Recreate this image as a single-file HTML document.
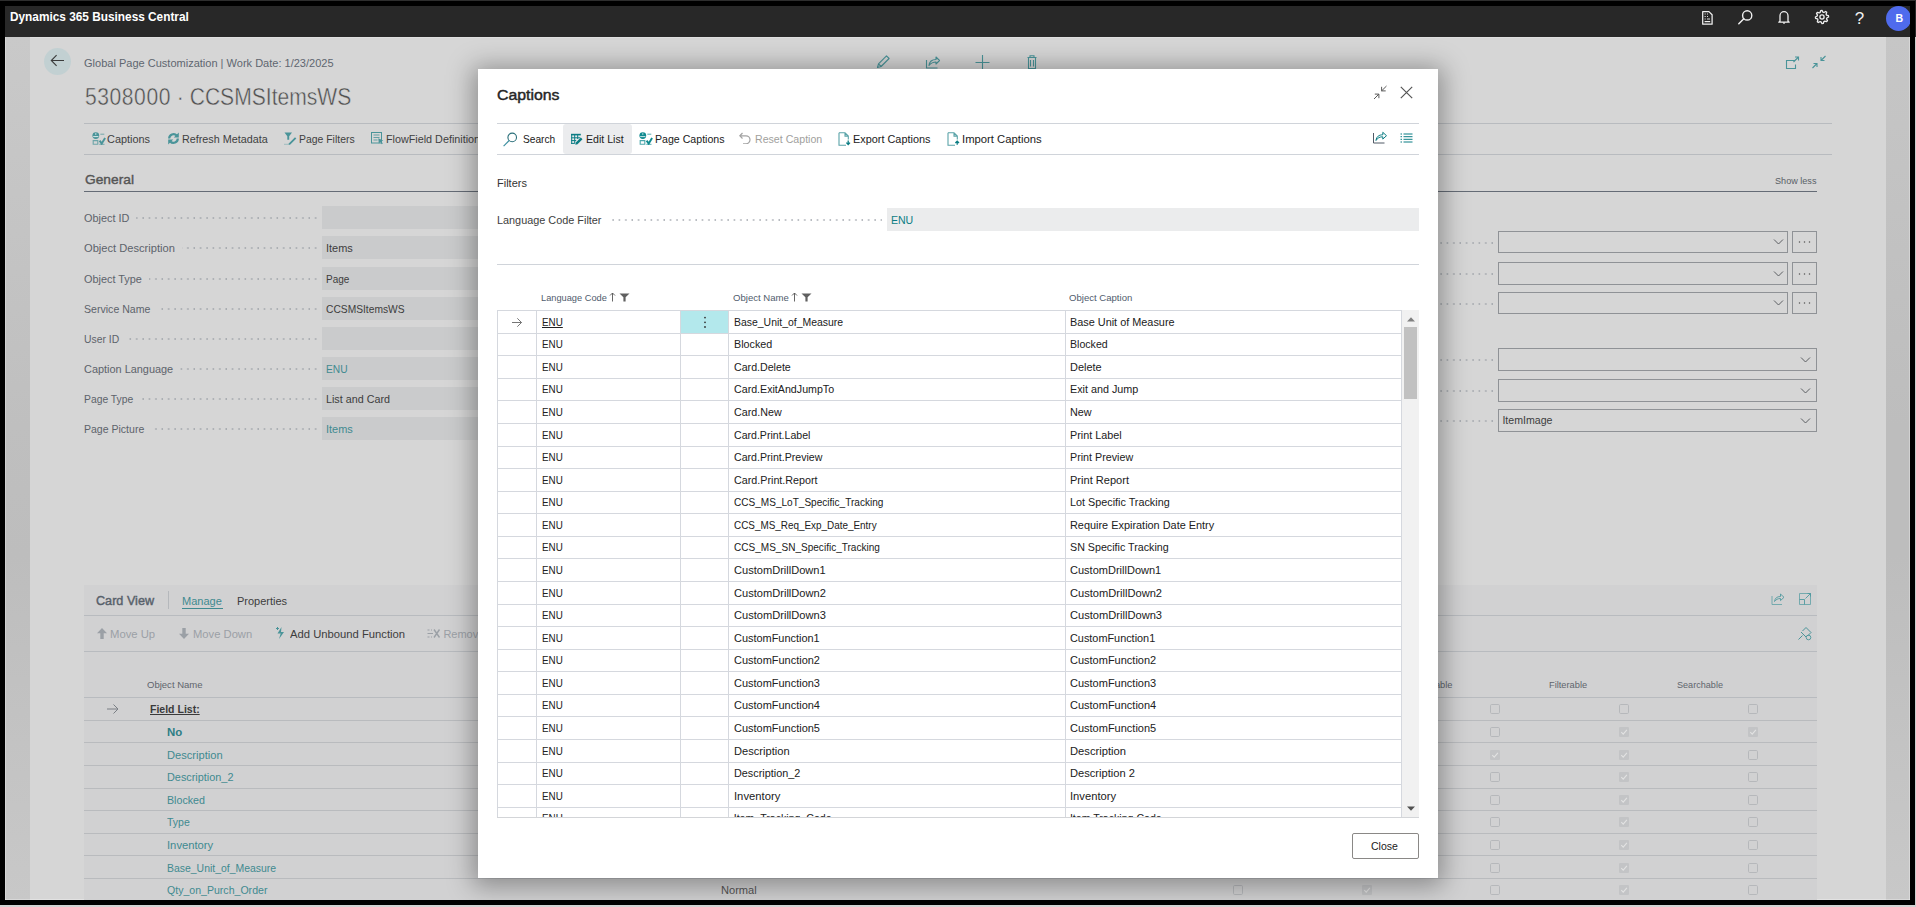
<!DOCTYPE html>
<html><head><meta charset="utf-8"><title>Captions</title>
<style>
html,body{margin:0;padding:0}
body{width:1916px;height:907px;position:relative;overflow:hidden;background:#000;font-family:"Liberation Sans",sans-serif}
.t{position:absolute;white-space:nowrap;line-height:20px}
.r{position:absolute;display:block}
#app{position:absolute;left:0;top:0;width:1916px;height:907px;clip-path:inset(6px 6px 7px 5px);background:#d6d6d6}
</style></head><body>
<div class="r" style="left:0px;top:0px;width:1916px;height:1px;background:#2e2e2e;"></div>
<div class="r" style="left:0px;top:905px;width:1916px;height:2px;background:#d2d2d2;"></div>
<div class="r" style="left:1915px;top:0px;width:1px;height:37px;background:#2a2a2a;"></div>
<div class="r" style="left:1915px;top:37px;width:1px;height:870px;background:#cdcdcd;"></div>
<div id="app">
<div class="r" style="left:5px;top:37px;width:25px;height:863px;background:linear-gradient(180deg,#c9c9c9 0%,#bfbfbf 45%,#bdbdbd 60%,#c8c8c8 100%);"></div>
<div class="r" style="left:5px;top:37px;width:1px;height:863px;background:rgba(255,255,255,0.25);"></div>
<div class="r" style="left:1886px;top:37px;width:24px;height:863px;background:linear-gradient(180deg,#c6c6c6 0%,#bdbdbd 45%,#bdbdbd 60%,#c8c8c8 100%);"></div>
<div class="r" style="left:1909px;top:37px;width:1px;height:863px;background:rgba(255,255,255,0.3);"></div>
<div class="r" style="left:5px;top:899px;width:1905px;height:1px;background:rgba(255,255,255,0.3);"></div>
<div class="r" style="left:5px;top:6px;width:1905px;height:31px;background:#282828;"></div>
<div class="r" style="left:30px;top:37px;width:1856px;height:1px;background:#dedede;"></div>
<div class="t" style="left:10.30px;top:7px;font-size:11.9px;color:#ffffff;font-weight:700;transform:scaleX(0.9948);transform-origin:0 0;">Dynamics 365 Business Central</div>
<svg class="r" style="left:1700px;top:9px;" width="16" height="18" viewBox="0 0 16 18"><path d="M2.7 2.6h6.2l3.2 3.2v9.4H2.7z" fill="none" stroke="#f0f0f0" stroke-width="1.25" stroke-linejoin="round"/><path d="M4.6 4.4h1.1v1.1H4.6zM7 4.4h1v1.1H7zM4.6 6.9h1.1v1.1H4.6zM7 6.9h1v1.1H7zM4.6 9.4h1.1v1.1H4.6zM7 9.6h3v0.9H7z" fill="#f0f0f0" opacity="0.9"/><path d="M4.6 12.6h5.6" stroke="#f0f0f0" stroke-width="1.2"/></svg>
<svg class="r" style="left:1736px;top:8px;" width="18" height="18" viewBox="0 0 18 18"><circle cx="11.2" cy="7.4" r="4.6" fill="none" stroke="#f0f0f0" stroke-width="1.4"/><path d="M7.8 10.8L2.8 15.8" stroke="#f0f0f0" stroke-width="1.5" stroke-linecap="round"/></svg>
<svg class="r" style="left:1776px;top:9px;" width="16" height="18" viewBox="0 0 16 18"><path d="M4 12.2V6.7a4 4 0 0 1 8 0v5.5l1.2 1H2.8z" fill="none" stroke="#f0f0f0" stroke-width="1.3" stroke-linejoin="round"/><path d="M6.8 13.6l1.2 1 1.2-1" fill="#f0f0f0" stroke="#f0f0f0" stroke-width="0.8"/></svg>
<svg class="r" style="left:1814px;top:9.4px;" width="16" height="16" viewBox="0 0 16 16"><polygon points="14.47,6.71 14.60,8.00 12.81,8.96 12.53,9.88 13.49,11.67 12.67,12.67 10.72,12.07 9.88,12.53 9.29,14.47 8.00,14.60 7.04,12.81 6.12,12.53 4.33,13.49 3.33,12.67 3.93,10.72 3.47,9.88 1.53,9.29 1.40,8.00 3.19,7.04 3.47,6.12 2.51,4.33 3.33,3.33 5.28,3.93 6.12,3.47 6.71,1.53 8.00,1.40 8.96,3.19 9.88,3.47 11.67,2.51 12.67,3.33 12.07,5.28 12.53,6.12" fill="none" stroke="#f0f0f0" stroke-width="1.3" stroke-linejoin="round"/><circle cx="8" cy="8" r="2.1" fill="none" stroke="#f0f0f0" stroke-width="1.3"/></svg>
<div class="t" style="left:1854.80px;top:9px;font-size:17px;color:#f0f0f0;">?</div>
<div class="r" style="left:1886px;top:6px;width:25px;height:25px;background:#4f6bed;border-radius:50%;"></div>
<div class="t" style="left:1895.40px;top:8px;font-size:10.6px;color:#ffffff;font-weight:700;">B</div>
<div class="r" style="left:44px;top:47.8px;width:27px;height:27px;background:#c2d0d2;border-radius:50%;"></div>
<svg class="r" style="left:50px;top:54px;" width="15" height="13" viewBox="0 0 15 13"><path d="M14 6.5H1.3M6.6 1.2L1.3 6.5l5.3 5.3" fill="none" stroke="#3b3b3b" stroke-width="1.1"/></svg>
<div class="t" style="left:84.30px;top:53px;font-size:11.0px;color:#5f6670;transform:scaleX(1.0020);transform-origin:0 0;">Global Page Customization | Work Date: 1/23/2025</div>
<div class="t" style="left:85.30px;top:87px;font-size:23.7px;color:#505050;transform:scaleX(0.89);transform-origin:0 0;-webkit-text-stroke:0.45px #d6d6d6;"><span style="letter-spacing:0.62px">5308000</span> · CCSMSItemsWS</div>
<svg class="r" style="left:875px;top:54px;" width="16" height="16" viewBox="0 0 16 16"><path d="M2.5 13.5l1-3.6 8-8 2.6 2.6-8 8z M3.5 9.9l2.6 2.6" fill="none" stroke="#4a9499" stroke-width="1.1" stroke-linejoin="round"/></svg>
<svg class="r" style="left:925px;top:54px;" width="16" height="16" viewBox="0 0 16 16"><path d="M1.5 6v8h11" fill="none" stroke="#4a9499" stroke-width="1.1"/><path d="M4 11.5c0.5-4 3-6 7-6V3l3.5 3.5L11 10V8c-3 0-5 1-7 3.5z" fill="none" stroke="#4a9499" stroke-width="1.1" stroke-linejoin="round"/></svg>
<svg class="r" style="left:974px;top:54px;" width="17" height="16" viewBox="0 0 17 16"><path d="M8.5 1v15M1.5 8.5h14" stroke="#4a9499" stroke-width="1.1"/></svg>
<svg class="r" style="left:1024px;top:54px;" width="16" height="16" viewBox="0 0 16 16"><path d="M3.5 3.5h9M6 3.5V1.8h4v1.7M4.5 3.5v11h7v-11M6.5 6v6.5M9.5 6v6.5" fill="none" stroke="#4a9499" stroke-width="1.1"/></svg>
<svg class="r" style="left:1784px;top:55px;" width="18" height="15" viewBox="0 0 18 15"><path d="M11 5.5H2.5v8h9V9.5" fill="none" stroke="#4a9499" stroke-width="1.1"/><path d="M9.5 7l5-5M11 2h3.5v3.5" fill="none" stroke="#4a9499" stroke-width="1.1"/></svg>
<svg class="r" style="left:1810px;top:54px;" width="18" height="16" viewBox="0 0 18 16"><path d="M15.5 2l-4.5 4.5M11 3v3.5h3.5M2.5 14l4.5-4.5M7 13V9.5H3.5" fill="none" stroke="#4a9499" stroke-width="1.1"/></svg>
<div class="r" style="left:84px;top:123px;width:1748px;height:1px;background:#b8bbbf;"></div>
<div class="r" style="left:84px;top:154px;width:1748px;height:1px;background:#b8bbbf;"></div>
<svg class="r" style="left:92px;top:131.5px;" width="14" height="13" viewBox="0 0 14 13"><circle cx="3.8" cy="3.6" r="3.4" fill="#4a9499"/><path d="M1.2 4.6h5.2M3.8 1.2v1.6" stroke="#fff" stroke-width="0.9" opacity="0.9"/><path d="M8.3 2.2h4" stroke="#4a9499" stroke-width="1" opacity="0.7"/><path d="M1.2 8.6h4.6v3.6H1.2z" fill="none" stroke="#4a9499" stroke-width="1.1" opacity="0.75"/><path d="M7.6 8.6l2.1 3 3.4-5.6" fill="none" stroke="#4a9499" stroke-width="1.9"/><path d="M7.3 12.3h5.2" stroke="#4a9499" stroke-width="1" opacity="0.7"/></svg>
<div class="t" style="left:107.30px;top:129px;font-size:10.9px;color:#3f3f3f;transform:scaleX(1.0023);transform-origin:0 0;">Captions</div>
<svg class="r" style="left:167px;top:132px;" width="13" height="13" viewBox="0 0 13 13"><path d="M2.2 6.5a4.3 4.3 0 0 1 7.5-2.9M10.8 6.5a4.3 4.3 0 0 1-7.5 2.9" fill="none" stroke="#4a9499" stroke-width="2.2"/><path d="M11.8 0.6v5H6.8zM1.2 12.4v-5h5z" fill="#4a9499"/></svg>
<div class="t" style="left:181.90px;top:129px;font-size:10.8px;color:#3f3f3f;transform:scaleX(0.9987);transform-origin:0 0;">Refresh Metadata</div>
<svg class="r" style="left:284px;top:131.5px;" width="13" height="13" viewBox="0 0 13 13"><path d="M0.5 0.5h7.5L5.2 4.3v3.5H3.3V4.3z" fill="#4a9499"/><path d="M5 11.2l6-6 1.3 1.3-6 6-1.9 0.6z" fill="#4a9499"/><path d="M0.5 12.3h3" stroke="#4a9499" stroke-width="0.8" stroke-dasharray="1 1"/></svg>
<div class="t" style="left:299.00px;top:130px;font-size:10.45px;color:#3f3f3f;transform:scaleX(0.9991);transform-origin:0 0;">Page Filters</div>
<svg class="r" style="left:371px;top:131.5px;" width="13" height="13" viewBox="0 0 13 13"><rect x="0.5" y="0.5" width="10" height="10.5" fill="none" stroke="#4a9499" stroke-width="1"/><path d="M2.5 3h6M2.5 5.5h6M2.5 8h4" stroke="#4a9499" stroke-width="1" opacity="0.8"/><path d="M7.3 6.3l5 2.2-2 0.8 1.5 2.2-1 0.7-1.4-2.2-1.6 1.4z" fill="#4a9499"/></svg>
<div class="t" style="left:385.90px;top:129px;font-size:10.8px;color:#3f3f3f;">FlowField Definitions</div>
<div class="t" style="left:84.60px;top:170px;font-size:13.6px;color:#555555;transform:scaleX(1.0121);transform-origin:0 0;-webkit-text-stroke:0.4px #555555;">General</div>
<div class="r" style="left:84px;top:190.5px;width:1733px;height:1.5px;background:#656c76;"></div>
<div class="t" style="left:1775.20px;top:171px;font-size:9.15px;color:#5a5f66;transform:scaleX(0.9970);transform-origin:0 0;">Show less</div>
<div class="t" style="left:84.30px;top:208px;font-size:11.2px;color:#5d636b;transform:scaleX(0.9721);transform-origin:0 0;">Object ID</div>
<div class="r" style="left:136px;top:217px;width:185px;height:2px;background:radial-gradient(circle at 1px 1px,#a6aaaf 0.6px,transparent 0.9px);background-size:6.4px 2px;background-repeat:repeat-x;background-position:right 0;"></div>
<div class="r" style="left:322px;top:206px;width:160px;height:23px;background:#cacbcc;"></div>
<div class="t" style="left:84.30px;top:238px;font-size:11.2px;color:#5d636b;transform:scaleX(0.9945);transform-origin:0 0;">Object Description</div>
<div class="r" style="left:182px;top:247px;width:139px;height:2px;background:radial-gradient(circle at 1px 1px,#a6aaaf 0.6px,transparent 0.9px);background-size:6.4px 2px;background-repeat:repeat-x;background-position:right 0;"></div>
<div class="r" style="left:322px;top:236px;width:160px;height:23px;background:#cacbcc;"></div>
<div class="t" style="left:325.60px;top:238px;font-size:10.8px;color:#3d3d3d;transform:scaleX(1.0149);transform-origin:0 0;">Items</div>
<div class="t" style="left:84.30px;top:269px;font-size:11.2px;color:#5d636b;transform:scaleX(0.9717);transform-origin:0 0;">Object Type</div>
<div class="r" style="left:149px;top:278px;width:172px;height:2px;background:radial-gradient(circle at 1px 1px,#a6aaaf 0.6px,transparent 0.9px);background-size:6.4px 2px;background-repeat:repeat-x;background-position:right 0;"></div>
<div class="r" style="left:322px;top:267px;width:160px;height:23px;background:#cacbcc;"></div>
<div class="t" style="left:325.60px;top:269px;font-size:10.8px;color:#3d3d3d;transform:scaleX(0.9279);transform-origin:0 0;">Page</div>
<div class="t" style="left:84.30px;top:299px;font-size:11.2px;color:#5d636b;transform:scaleX(0.9455);transform-origin:0 0;">Service Name</div>
<div class="r" style="left:157px;top:308px;width:164px;height:2px;background:radial-gradient(circle at 1px 1px,#a6aaaf 0.6px,transparent 0.9px);background-size:6.4px 2px;background-repeat:repeat-x;background-position:right 0;"></div>
<div class="r" style="left:322px;top:297px;width:160px;height:23px;background:#cacbcc;"></div>
<div class="t" style="left:325.60px;top:299px;font-size:10.8px;color:#3d3d3d;transform:scaleX(0.9495);transform-origin:0 0;">CCSMSItemsWS</div>
<div class="t" style="left:84.30px;top:329px;font-size:11.2px;color:#5d636b;transform:scaleX(0.9271);transform-origin:0 0;">User ID</div>
<div class="r" style="left:126px;top:338px;width:195px;height:2px;background:radial-gradient(circle at 1px 1px,#a6aaaf 0.6px,transparent 0.9px);background-size:6.4px 2px;background-repeat:repeat-x;background-position:right 0;"></div>
<div class="r" style="left:322px;top:327px;width:160px;height:23px;background:#cacbcc;"></div>
<div class="t" style="left:84.30px;top:359px;font-size:11.2px;color:#5d636b;transform:scaleX(0.9753);transform-origin:0 0;">Caption Language</div>
<div class="r" style="left:180px;top:368px;width:141px;height:2px;background:radial-gradient(circle at 1px 1px,#a6aaaf 0.6px,transparent 0.9px);background-size:6.4px 2px;background-repeat:repeat-x;background-position:right 0;"></div>
<div class="r" style="left:322px;top:357px;width:160px;height:23px;background:#cacbcc;"></div>
<div class="t" style="left:325.60px;top:359px;font-size:10.8px;color:#3f8a90;transform:scaleX(0.9435);transform-origin:0 0;">ENU</div>
<div class="t" style="left:84.30px;top:389px;font-size:11.2px;color:#5d636b;transform:scaleX(0.9238);transform-origin:0 0;">Page Type</div>
<div class="r" style="left:140px;top:398px;width:181px;height:2px;background:radial-gradient(circle at 1px 1px,#a6aaaf 0.6px,transparent 0.9px);background-size:6.4px 2px;background-repeat:repeat-x;background-position:right 0;"></div>
<div class="r" style="left:322px;top:387px;width:160px;height:23px;background:#cacbcc;"></div>
<div class="t" style="left:325.60px;top:389px;font-size:10.8px;color:#3d3d3d;transform:scaleX(0.9960);transform-origin:0 0;">List and Card</div>
<div class="t" style="left:84.30px;top:419px;font-size:11.2px;color:#5d636b;transform:scaleX(0.9404);transform-origin:0 0;">Page Picture</div>
<div class="r" style="left:151px;top:428px;width:170px;height:2px;background:radial-gradient(circle at 1px 1px,#a6aaaf 0.6px,transparent 0.9px);background-size:6.4px 2px;background-repeat:repeat-x;background-position:right 0;"></div>
<div class="r" style="left:322px;top:417px;width:160px;height:23px;background:#cacbcc;"></div>
<div class="t" style="left:325.60px;top:419px;font-size:10.8px;color:#3f8a90;transform:scaleX(1.0149);transform-origin:0 0;">Items</div>
<div class="r" style="left:1440px;top:242px;width:54px;height:2px;background:radial-gradient(circle at 1px 1px,#a6aaaf 0.6px,transparent 0.9px);background-size:6.4px 2px;background-repeat:repeat-x;"></div>
<div class="r" style="left:1498px;top:231px;width:290px;height:22px;background:transparent;box-sizing:border-box;border:1px solid #8f9296;"></div>
<svg class="r" style="left:1773px;top:238.0px;" width="11" height="8" viewBox="0 0 11 8"><path d="M1 1.5l4.5 4.5L10 1.5" fill="none" stroke="#5c5f63" stroke-width="1"/></svg>
<div class="r" style="left:1792px;top:231px;width:25px;height:22px;background:transparent;box-sizing:border-box;border:1px solid #8f9296;"></div>
<svg class="r" style="left:1798px;top:241.0px;" width="13" height="2" viewBox="0 0 13 2"><circle cx="1.5" cy="1" r="0.75" fill="#555"/><circle cx="6.5" cy="1" r="0.75" fill="#555"/><circle cx="11.5" cy="1" r="0.75" fill="#555"/></svg>
<div class="r" style="left:1440px;top:273px;width:54px;height:2px;background:radial-gradient(circle at 1px 1px,#a6aaaf 0.6px,transparent 0.9px);background-size:6.4px 2px;background-repeat:repeat-x;"></div>
<div class="r" style="left:1498px;top:262px;width:290px;height:23px;background:transparent;box-sizing:border-box;border:1px solid #8f9296;"></div>
<svg class="r" style="left:1773px;top:269.5px;" width="11" height="8" viewBox="0 0 11 8"><path d="M1 1.5l4.5 4.5L10 1.5" fill="none" stroke="#5c5f63" stroke-width="1"/></svg>
<div class="r" style="left:1792px;top:262px;width:25px;height:23px;background:transparent;box-sizing:border-box;border:1px solid #8f9296;"></div>
<svg class="r" style="left:1798px;top:272.5px;" width="13" height="2" viewBox="0 0 13 2"><circle cx="1.5" cy="1" r="0.75" fill="#555"/><circle cx="6.5" cy="1" r="0.75" fill="#555"/><circle cx="11.5" cy="1" r="0.75" fill="#555"/></svg>
<div class="r" style="left:1440px;top:303px;width:54px;height:2px;background:radial-gradient(circle at 1px 1px,#a6aaaf 0.6px,transparent 0.9px);background-size:6.4px 2px;background-repeat:repeat-x;"></div>
<div class="r" style="left:1498px;top:292px;width:290px;height:22px;background:transparent;box-sizing:border-box;border:1px solid #8f9296;"></div>
<svg class="r" style="left:1773px;top:299.0px;" width="11" height="8" viewBox="0 0 11 8"><path d="M1 1.5l4.5 4.5L10 1.5" fill="none" stroke="#5c5f63" stroke-width="1"/></svg>
<div class="r" style="left:1792px;top:292px;width:25px;height:22px;background:transparent;box-sizing:border-box;border:1px solid #8f9296;"></div>
<svg class="r" style="left:1798px;top:302.0px;" width="13" height="2" viewBox="0 0 13 2"><circle cx="1.5" cy="1" r="0.75" fill="#555"/><circle cx="6.5" cy="1" r="0.75" fill="#555"/><circle cx="11.5" cy="1" r="0.75" fill="#555"/></svg>
<div class="r" style="left:1440px;top:359px;width:54px;height:2px;background:radial-gradient(circle at 1px 1px,#a6aaaf 0.6px,transparent 0.9px);background-size:6.4px 2px;background-repeat:repeat-x;"></div>
<div class="r" style="left:1498px;top:348px;width:319px;height:23px;background:transparent;box-sizing:border-box;border:1px solid #8f9296;"></div>
<svg class="r" style="left:1800px;top:355.5px;" width="11" height="8" viewBox="0 0 11 8"><path d="M1 1.5l4.5 4.5L10 1.5" fill="none" stroke="#5c5f63" stroke-width="1"/></svg>
<div class="r" style="left:1440px;top:390px;width:54px;height:2px;background:radial-gradient(circle at 1px 1px,#a6aaaf 0.6px,transparent 0.9px);background-size:6.4px 2px;background-repeat:repeat-x;"></div>
<div class="r" style="left:1498px;top:379px;width:319px;height:23px;background:transparent;box-sizing:border-box;border:1px solid #8f9296;"></div>
<svg class="r" style="left:1800px;top:386.5px;" width="11" height="8" viewBox="0 0 11 8"><path d="M1 1.5l4.5 4.5L10 1.5" fill="none" stroke="#5c5f63" stroke-width="1"/></svg>
<div class="r" style="left:1440px;top:420px;width:54px;height:2px;background:radial-gradient(circle at 1px 1px,#a6aaaf 0.6px,transparent 0.9px);background-size:6.4px 2px;background-repeat:repeat-x;"></div>
<div class="r" style="left:1498px;top:409px;width:319px;height:23px;background:transparent;box-sizing:border-box;border:1px solid #8f9296;"></div>
<svg class="r" style="left:1800px;top:416.5px;" width="11" height="8" viewBox="0 0 11 8"><path d="M1 1.5l4.5 4.5L10 1.5" fill="none" stroke="#5c5f63" stroke-width="1"/></svg>
<div class="t" style="left:1502.40px;top:410px;font-size:10.6px;color:#3d3d3d;">ItemImage</div>
<div class="r" style="left:84px;top:585px;width:1733px;height:315px;background:#d1d1d2;"></div>
<div class="t" style="left:96.30px;top:591px;font-size:12.5px;color:#57606a;transform:scaleX(1.0104);transform-origin:0 0;-webkit-text-stroke:0.4px #57606a;">Card View</div>
<div class="r" style="left:168px;top:591px;width:1px;height:18px;background:#b5b8bc;"></div>
<div class="t" style="left:182.10px;top:591px;font-size:11.1px;color:#3f8a90;transform:scaleX(0.9944);transform-origin:0 0;">Manage</div>
<div class="r" style="left:182px;top:607.8px;width:41px;height:1.6px;background:#3f8a90;"></div>
<div class="t" style="left:236.80px;top:591px;font-size:10.95px;color:#3d3d3d;transform:scaleX(1.0054);transform-origin:0 0;">Properties</div>
<div class="r" style="left:84px;top:615px;width:1733px;height:1px;background:#b8bbbf;"></div>
<svg class="r" style="left:95.5px;top:627px;" width="12" height="13" viewBox="0 0 12 13"><path d="M6 1L1 6.2h3.3V12h3.4V6.2H11z" fill="#9ba0a6"/></svg>
<div class="t" style="left:110.40px;top:624px;font-size:11.0px;color:#9ba0a6;transform:scaleX(1.0250);transform-origin:0 0;">Move Up</div>
<svg class="r" style="left:177.5px;top:627px;" width="12" height="13" viewBox="0 0 12 13"><path d="M6 12L1 6.8h3.3V1h3.4v5.8H11z" fill="#9ba0a6"/></svg>
<div class="t" style="left:192.60px;top:624px;font-size:11.0px;color:#9ba0a6;transform:scaleX(1.0193);transform-origin:0 0;">Move Down</div>
<svg class="r" style="left:275px;top:626px;" width="11" height="14" viewBox="0 0 11 14"><path d="M6.5 1L2.5 7.5h3.2L4 13l5-7H6z" fill="#4a9499"/><path d="M1 2.5h3M2.5 1v3" stroke="#4a9499" stroke-width="1"/></svg>
<div class="t" style="left:290.10px;top:624px;font-size:11.1px;color:#3d3d3d;transform:scaleX(1.0136);transform-origin:0 0;">Add Unbound Function</div>
<svg class="r" style="left:427px;top:627px;" width="14" height="13" viewBox="0 0 14 13"><path d="M0.5 3h2M0.5 6.5h5.5M0.5 10h2M4 3h1M4 10h1" stroke="#9ba0a6" stroke-width="1.2"/><path d="M7 2.5l5.5 8M12.5 2.5l-5.5 8" stroke="#9ba0a6" stroke-width="1.4"/></svg>
<div class="t" style="left:443.40px;top:624px;font-size:11.0px;color:#9ba0a6;">Remove</div>
<div class="r" style="left:84px;top:651px;width:1733px;height:1px;background:#b8bbbf;"></div>
<svg class="r" style="left:1771px;top:591px;" width="15" height="14" viewBox="0 0 15 14"><path d="M1 5v8.5h10" fill="none" stroke="#6aa5a9" stroke-width="0.9"/><path d="M3.5 10.5c0.5-3.5 2.5-5 6-5V3l3.5 3.3-3.5 3.3V7.5c-2.8 0-4.4 1-6 3z" fill="none" stroke="#4f999e" stroke-width="0.9" stroke-linejoin="round"/></svg>
<svg class="r" style="left:1798px;top:592px;" width="14" height="14" viewBox="0 0 14 14"><path d="M1.5 1.5h11v11h-11z" fill="none" stroke="#6aa5a9" stroke-width="0.9"/><path d="M1.5 7.5h5v5M7.5 6.5l5-5M9.5 1.5h3V4.5" fill="none" stroke="#4f999e" stroke-width="0.9"/></svg>
<svg class="r" style="left:1797px;top:626px;" width="15" height="15" viewBox="0 0 15 15"><path d="M1.5 13.5l4-4M4 6l5 5M5.5 5l3.5-3.5 5 5L10.5 10" fill="none" stroke="#4a9499" stroke-width="1"/><circle cx="11.5" cy="11.5" r="2.3" fill="none" stroke="#4a9499" stroke-width="0.9"/></svg>
<div class="t" style="left:146.80px;top:675px;font-size:9.55px;color:#5f656d;transform:scaleX(0.9978);transform-origin:0 0;">Object Name</div>
<div class="t" style="left:1418.90px;top:675px;font-size:9.3px;color:#5f656d;">Editable</div>
<div class="t" style="left:1549.20px;top:675px;font-size:9.3px;color:#5f656d;transform:scaleX(0.9982);transform-origin:0 0;">Filterable</div>
<div class="t" style="left:1676.60px;top:675px;font-size:9.3px;color:#5f656d;transform:scaleX(0.9775);transform-origin:0 0;">Searchable</div>
<div class="r" style="left:84px;top:697px;width:1733px;height:1px;background:#b8bbbf;"></div>
<div class="r" style="left:84px;top:720px;width:1733px;height:1px;background:#b9bbbe;"></div>
<div class="r" style="left:84px;top:742px;width:1733px;height:1px;background:#b9bbbe;"></div>
<div class="r" style="left:84px;top:765px;width:1733px;height:1px;background:#b9bbbe;"></div>
<div class="r" style="left:84px;top:788px;width:1733px;height:1px;background:#b9bbbe;"></div>
<div class="r" style="left:84px;top:810px;width:1733px;height:1px;background:#b9bbbe;"></div>
<div class="r" style="left:84px;top:833px;width:1733px;height:1px;background:#b9bbbe;"></div>
<div class="r" style="left:84px;top:855px;width:1733px;height:1px;background:#b9bbbe;"></div>
<div class="r" style="left:84px;top:878px;width:1733px;height:1px;background:#b9bbbe;"></div>
<svg class="r" style="left:106px;top:703px;" width="14" height="12" viewBox="0 0 14 12"><path d="M1 6h11M7.5 1.5L12 6l-4.5 4.5" fill="none" stroke="#7a7f85" stroke-width="1"/></svg>
<div class="t" style="left:150.40px;top:699px;font-size:10.9px;color:#3a3a3a;font-weight:700;transform:scaleX(0.9660);transform-origin:0 0;text-decoration:underline;">Field List:</div>
<div class="t" style="left:166.80px;top:722px;font-size:11.0px;color:#2f7e85;font-weight:700;transform:scaleX(1.0419);transform-origin:0 0;">No</div>
<div class="t" style="left:166.80px;top:745px;font-size:10.9px;color:#3f8a90;transform:scaleX(1.0202);transform-origin:0 0;">Description</div>
<div class="t" style="left:166.80px;top:767px;font-size:10.9px;color:#3f8a90;transform:scaleX(0.9977);transform-origin:0 0;">Description_2</div>
<div class="t" style="left:166.80px;top:790px;font-size:10.9px;color:#3f8a90;transform:scaleX(0.9793);transform-origin:0 0;">Blocked</div>
<div class="t" style="left:166.80px;top:812px;font-size:10.9px;color:#3f8a90;transform:scaleX(0.9639);transform-origin:0 0;">Type</div>
<div class="t" style="left:166.80px;top:835px;font-size:10.9px;color:#3f8a90;transform:scaleX(1.0322);transform-origin:0 0;">Inventory</div>
<div class="t" style="left:166.80px;top:858px;font-size:10.9px;color:#3f8a90;transform:scaleX(0.9587);transform-origin:0 0;">Base_Unit_of_Measure</div>
<div class="t" style="left:166.80px;top:880px;font-size:10.9px;color:#3f8a90;transform:scaleX(0.9700);transform-origin:0 0;">Qty_on_Purch_Order</div>
<div class="t" style="left:720.80px;top:880px;font-size:10.9px;color:#555555;transform:scaleX(1.0184);transform-origin:0 0;">Normal</div>
<svg class="r" style="left:1490px;top:704px;" width="10" height="10" viewBox="0 0 10 10"><rect x="0.5" y="0.5" width="9" height="9" rx="1.2" fill="none" stroke="#b6b8bb"/></svg>
<svg class="r" style="left:1619px;top:704px;" width="10" height="10" viewBox="0 0 10 10"><rect x="0.5" y="0.5" width="9" height="9" rx="1.2" fill="none" stroke="#b6b8bb"/></svg>
<svg class="r" style="left:1748px;top:704px;" width="10" height="10" viewBox="0 0 10 10"><rect x="0.5" y="0.5" width="9" height="9" rx="1.2" fill="none" stroke="#b6b8bb"/></svg>
<svg class="r" style="left:1490px;top:727px;" width="10" height="10" viewBox="0 0 10 10"><rect x="0.5" y="0.5" width="9" height="9" rx="1.2" fill="none" stroke="#b6b8bb"/></svg>
<svg class="r" style="left:1619px;top:727px;" width="10" height="10" viewBox="0 0 10 10"><rect x="0" y="0" width="10" height="10" rx="1" fill="#c3c4c6"/><path d="M2.3 5.2l1.9 2 3.7-4.4" fill="none" stroke="#e2e2e2" stroke-width="1.1"/></svg>
<svg class="r" style="left:1748px;top:727px;" width="10" height="10" viewBox="0 0 10 10"><rect x="0" y="0" width="10" height="10" rx="1" fill="#c3c4c6"/><path d="M2.3 5.2l1.9 2 3.7-4.4" fill="none" stroke="#e2e2e2" stroke-width="1.1"/></svg>
<svg class="r" style="left:1490px;top:750px;" width="10" height="10" viewBox="0 0 10 10"><rect x="0" y="0" width="10" height="10" rx="1" fill="#c3c4c6"/><path d="M2.3 5.2l1.9 2 3.7-4.4" fill="none" stroke="#e2e2e2" stroke-width="1.1"/></svg>
<svg class="r" style="left:1619px;top:750px;" width="10" height="10" viewBox="0 0 10 10"><rect x="0" y="0" width="10" height="10" rx="1" fill="#c3c4c6"/><path d="M2.3 5.2l1.9 2 3.7-4.4" fill="none" stroke="#e2e2e2" stroke-width="1.1"/></svg>
<svg class="r" style="left:1748px;top:750px;" width="10" height="10" viewBox="0 0 10 10"><rect x="0.5" y="0.5" width="9" height="9" rx="1.2" fill="none" stroke="#b6b8bb"/></svg>
<svg class="r" style="left:1490px;top:772px;" width="10" height="10" viewBox="0 0 10 10"><rect x="0.5" y="0.5" width="9" height="9" rx="1.2" fill="none" stroke="#b6b8bb"/></svg>
<svg class="r" style="left:1619px;top:772px;" width="10" height="10" viewBox="0 0 10 10"><rect x="0" y="0" width="10" height="10" rx="1" fill="#c3c4c6"/><path d="M2.3 5.2l1.9 2 3.7-4.4" fill="none" stroke="#e2e2e2" stroke-width="1.1"/></svg>
<svg class="r" style="left:1748px;top:772px;" width="10" height="10" viewBox="0 0 10 10"><rect x="0.5" y="0.5" width="9" height="9" rx="1.2" fill="none" stroke="#b6b8bb"/></svg>
<svg class="r" style="left:1490px;top:795px;" width="10" height="10" viewBox="0 0 10 10"><rect x="0.5" y="0.5" width="9" height="9" rx="1.2" fill="none" stroke="#b6b8bb"/></svg>
<svg class="r" style="left:1619px;top:795px;" width="10" height="10" viewBox="0 0 10 10"><rect x="0" y="0" width="10" height="10" rx="1" fill="#c3c4c6"/><path d="M2.3 5.2l1.9 2 3.7-4.4" fill="none" stroke="#e2e2e2" stroke-width="1.1"/></svg>
<svg class="r" style="left:1748px;top:795px;" width="10" height="10" viewBox="0 0 10 10"><rect x="0.5" y="0.5" width="9" height="9" rx="1.2" fill="none" stroke="#b6b8bb"/></svg>
<svg class="r" style="left:1490px;top:817px;" width="10" height="10" viewBox="0 0 10 10"><rect x="0.5" y="0.5" width="9" height="9" rx="1.2" fill="none" stroke="#b6b8bb"/></svg>
<svg class="r" style="left:1619px;top:817px;" width="10" height="10" viewBox="0 0 10 10"><rect x="0" y="0" width="10" height="10" rx="1" fill="#c3c4c6"/><path d="M2.3 5.2l1.9 2 3.7-4.4" fill="none" stroke="#e2e2e2" stroke-width="1.1"/></svg>
<svg class="r" style="left:1748px;top:817px;" width="10" height="10" viewBox="0 0 10 10"><rect x="0.5" y="0.5" width="9" height="9" rx="1.2" fill="none" stroke="#b6b8bb"/></svg>
<svg class="r" style="left:1490px;top:840px;" width="10" height="10" viewBox="0 0 10 10"><rect x="0.5" y="0.5" width="9" height="9" rx="1.2" fill="none" stroke="#b6b8bb"/></svg>
<svg class="r" style="left:1619px;top:840px;" width="10" height="10" viewBox="0 0 10 10"><rect x="0" y="0" width="10" height="10" rx="1" fill="#c3c4c6"/><path d="M2.3 5.2l1.9 2 3.7-4.4" fill="none" stroke="#e2e2e2" stroke-width="1.1"/></svg>
<svg class="r" style="left:1748px;top:840px;" width="10" height="10" viewBox="0 0 10 10"><rect x="0.5" y="0.5" width="9" height="9" rx="1.2" fill="none" stroke="#b6b8bb"/></svg>
<svg class="r" style="left:1490px;top:863px;" width="10" height="10" viewBox="0 0 10 10"><rect x="0.5" y="0.5" width="9" height="9" rx="1.2" fill="none" stroke="#b6b8bb"/></svg>
<svg class="r" style="left:1619px;top:863px;" width="10" height="10" viewBox="0 0 10 10"><rect x="0" y="0" width="10" height="10" rx="1" fill="#c3c4c6"/><path d="M2.3 5.2l1.9 2 3.7-4.4" fill="none" stroke="#e2e2e2" stroke-width="1.1"/></svg>
<svg class="r" style="left:1748px;top:863px;" width="10" height="10" viewBox="0 0 10 10"><rect x="0.5" y="0.5" width="9" height="9" rx="1.2" fill="none" stroke="#b6b8bb"/></svg>
<svg class="r" style="left:1233px;top:885px;" width="10" height="10" viewBox="0 0 10 10"><rect x="0.5" y="0.5" width="9" height="9" rx="1.2" fill="none" stroke="#b6b8bb"/></svg>
<svg class="r" style="left:1362px;top:885px;" width="10" height="10" viewBox="0 0 10 10"><rect x="0" y="0" width="10" height="10" rx="1" fill="#c3c4c6"/><path d="M2.3 5.2l1.9 2 3.7-4.4" fill="none" stroke="#e2e2e2" stroke-width="1.1"/></svg>
<svg class="r" style="left:1490px;top:885px;" width="10" height="10" viewBox="0 0 10 10"><rect x="0.5" y="0.5" width="9" height="9" rx="1.2" fill="none" stroke="#b6b8bb"/></svg>
<svg class="r" style="left:1619px;top:885px;" width="10" height="10" viewBox="0 0 10 10"><rect x="0" y="0" width="10" height="10" rx="1" fill="#c3c4c6"/><path d="M2.3 5.2l1.9 2 3.7-4.4" fill="none" stroke="#e2e2e2" stroke-width="1.1"/></svg>
<svg class="r" style="left:1748px;top:885px;" width="10" height="10" viewBox="0 0 10 10"><rect x="0.5" y="0.5" width="9" height="9" rx="1.2" fill="none" stroke="#b6b8bb"/></svg>
<div class="r" style="left:478px;top:69px;width:960px;height:809px;background:#ffffff;box-shadow:0 3px 24px 5px rgba(0,0,0,0.34);"></div>
<div class="t" style="left:497.20px;top:85px;font-size:15.2px;color:#262626;transform:scaleX(1.0423);transform-origin:0 0;-webkit-text-stroke:0.45px #262626;">Captions</div>
<svg class="r" style="left:1373px;top:85px;" width="15" height="15" viewBox="0 0 15 15"><path d="M13.5 1L8.6 5.9M8.6 1.8v4.1h4.1M1 14l4.9-4.9M1.8 9.1h4.1v4.1" fill="none" stroke="#5a5a5a" stroke-width="1"/></svg>
<svg class="r" style="left:1399.5px;top:86px;" width="13" height="13" viewBox="0 0 13 13"><path d="M0.8 0.8l11.4 11.4M12.2 0.8L0.8 12.2" fill="none" stroke="#555555" stroke-width="1.2"/></svg>
<div class="r" style="left:497px;top:123px;width:922px;height:1px;background:#d0d4da;"></div>
<div class="r" style="left:497px;top:154px;width:922px;height:1px;background:#d0d4da;"></div>
<div class="r" style="left:563px;top:124px;width:69px;height:30px;background:#ebecee;border-radius:3px;"></div>
<svg class="r" style="left:502px;top:131px;" width="17" height="16" viewBox="0 0 17 16"><circle cx="10.2" cy="6.4" r="4.3" fill="none" stroke="#2a6f7a" stroke-width="1.1"/><path d="M7.2 9.5L1.6 15.1" stroke="#3c8fa0" stroke-width="1.1"/></svg>
<div class="t" style="left:523.00px;top:130px;font-size:10.1px;color:#212121;transform:scaleX(1.0057);transform-origin:0 0;">Search</div>
<svg class="r" style="left:569px;top:132px;" width="14" height="14" viewBox="0 0 14 14"><path d="M2 1.8h9.8v1.6H2z" fill="#0b7d84"/><path d="M2.2 5.8h9M2.2 8.6h5M2.2 11.4h3.5M2.7 3v9M5.7 3v8.5M8.7 3v4" fill="none" stroke="#0b7d84" stroke-width="1"/><path d="M6.3 12.8l0.5-2.2 5-5 1.7 1.7-5 5z" fill="#0b7d84"/></svg>
<div class="t" style="left:585.80px;top:129px;font-size:10.55px;color:#212121;transform:scaleX(1.0025);transform-origin:0 0;">Edit List</div>
<svg class="r" style="left:639px;top:131.5px;" width="14" height="13" viewBox="0 0 14 13"><circle cx="3.8" cy="3.6" r="3.4" fill="#0f8a90"/><path d="M1.2 4.6h5.2M3.8 1.2v1.6" stroke="#fff" stroke-width="0.9" opacity="0.9"/><path d="M8.3 2.2h4" stroke="#0f8a90" stroke-width="1" opacity="0.7"/><path d="M1.2 8.6h4.6v3.6H1.2z" fill="none" stroke="#0f8a90" stroke-width="1.1" opacity="0.75"/><path d="M7.6 8.6l2.1 3 3.4-5.6" fill="none" stroke="#0f8a90" stroke-width="1.9"/><path d="M7.3 12.3h5.2" stroke="#0f8a90" stroke-width="1" opacity="0.7"/></svg>
<div class="t" style="left:654.80px;top:129px;font-size:10.6px;color:#212121;transform:scaleX(1.0009);transform-origin:0 0;">Page Captions</div>
<svg class="r" style="left:739px;top:132px;" width="13" height="12" viewBox="0 0 13 12"><path d="M3.5 1L0.8 3.8l2.7 2.7M1 3.8h6a4 4 0 0 1 0 8H4" fill="none" stroke="#a3a3a3" stroke-width="1.2"/></svg>
<div class="t" style="left:755.10px;top:129px;font-size:10.62px;color:#a19f9d;transform:scaleX(1.0003);transform-origin:0 0;">Reset Caption</div>
<svg class="r" style="left:838px;top:131.5px;" width="13" height="14" viewBox="0 0 13 14"><path d="M1 0.8h6l3.3 3.3v3.5M7 0.8v3.3h3.3M1 0.8v12.4h7" fill="none" stroke="#5aa3a8" stroke-width="1.1"/><path d="M10.2 8.6v3.6M8.4 10.6l1.8 1.9 1.8-1.9" fill="none" stroke="#0b7d84" stroke-width="1.3"/></svg>
<div class="t" style="left:853.00px;top:129px;font-size:10.9px;color:#212121;transform:scaleX(0.9993);transform-origin:0 0;">Export Captions</div>
<svg class="r" style="left:946.5px;top:131.5px;" width="13" height="14" viewBox="0 0 13 14"><path d="M1 0.8h6l3.3 3.3v3.5M7 0.8v3.3h3.3M1 0.8v12.4h7" fill="none" stroke="#5aa3a8" stroke-width="1.1"/><path d="M10.2 12.8V9.2M8.4 11l1.8-1.9 1.8 1.9" fill="none" stroke="#0b7d84" stroke-width="1.3"/></svg>
<div class="t" style="left:961.60px;top:129px;font-size:11.25px;color:#212121;transform:scaleX(1.0022);transform-origin:0 0;">Import Captions</div>
<svg class="r" style="left:1372px;top:130px;" width="16" height="14" viewBox="0 0 16 14"><path d="M1.5 3v10h11" fill="none" stroke="#505a66" stroke-width="1"/><path d="M4 10.5c0.5-4 3-5.7 6.8-5.7V2.3l3.7 3.4-3.7 3.4V6.8c-3 0-5.2 1-6.8 3.7z" fill="none" stroke="#0b7d84" stroke-width="1" stroke-linejoin="round"/></svg>
<svg class="r" style="left:1400px;top:133px;" width="13" height="10" viewBox="0 0 13 10"><path d="M3.5 1h9M3.5 3.7h9M3.5 6.3h9M3.5 9h9" stroke="#0b7d84" stroke-width="1"/><path d="M0.5 1h1.5M0.5 3.7h1.5M0.5 6.3h1.5M0.5 9h1.5" stroke="#0b7d84" stroke-width="1"/></svg>
<div class="t" style="left:497.00px;top:173px;font-size:11.0px;color:#333333;transform:scaleX(0.9993);transform-origin:0 0;">Filters</div>
<div class="t" style="left:497.00px;top:210px;font-size:10.87px;color:#3d3d3d;transform:scaleX(1.0003);transform-origin:0 0;">Language Code Filter</div>
<div class="r" style="left:612px;top:219px;width:270px;height:2px;background:radial-gradient(circle at 1px 1px,#b0b4ba 0.6px,transparent 0.9px);background-size:6.4px 2px;background-repeat:repeat-x;"></div>
<div class="r" style="left:887px;top:208px;width:532px;height:23px;background:#ebeced;"></div>
<div class="t" style="left:890.90px;top:210px;font-size:10.6px;color:#0b7d84;">ENU</div>
<div class="r" style="left:497px;top:264px;width:922px;height:1px;background:#d0d4da;"></div>
<div class="t" style="left:540.80px;top:288px;font-size:9.27px;color:#505c6d;transform:scaleX(0.9984);transform-origin:0 0;">Language Code</div>
<svg class="r" style="left:609px;top:292px;" width="7" height="10" viewBox="0 0 7 10"><path d="M3.5 9.5V1M1 3.5l2.5-2.5 2.5 2.5" fill="none" stroke="#555" stroke-width="0.9"/></svg>
<svg class="r" style="left:619px;top:292.5px;" width="11" height="9" viewBox="0 0 11 9"><path d="M0.5 0.5h10L6.6 4.3v4.2H4.4V4.3z" fill="#606060"/></svg>
<div class="t" style="left:732.90px;top:288px;font-size:9.6px;color:#505c6d;transform:scaleX(0.9979);transform-origin:0 0;">Object Name</div>
<svg class="r" style="left:790.5px;top:292px;" width="7" height="10" viewBox="0 0 7 10"><path d="M3.5 9.5V1M1 3.5l2.5-2.5 2.5 2.5" fill="none" stroke="#555" stroke-width="0.9"/></svg>
<svg class="r" style="left:801px;top:292.5px;" width="11" height="9" viewBox="0 0 11 9"><path d="M0.5 0.5h10L6.6 4.3v4.2H4.4V4.3z" fill="#606060"/></svg>
<div class="t" style="left:1069.40px;top:288px;font-size:9.58px;color:#505c6d;transform:scaleX(0.9989);transform-origin:0 0;">Object Caption</div>
<div class="r" style="left:497px;top:310px;width:905px;height:507px;overflow:hidden">
<div class="r" style="left:184px;top:1px;width:47px;height:22px;background:#b3e8ec;"></div>
<div class="r" style="left:0px;top:0px;width:905px;height:1px;background:#d5d8de;"></div>
<div class="r" style="left:0px;top:23px;width:905px;height:1px;background:#d5d8de;"></div>
<div class="r" style="left:0px;top:45px;width:905px;height:1px;background:#d5d8de;"></div>
<div class="r" style="left:0px;top:68px;width:905px;height:1px;background:#d5d8de;"></div>
<div class="r" style="left:0px;top:90px;width:905px;height:1px;background:#d5d8de;"></div>
<div class="r" style="left:0px;top:113px;width:905px;height:1px;background:#d5d8de;"></div>
<div class="r" style="left:0px;top:136px;width:905px;height:1px;background:#d5d8de;"></div>
<div class="r" style="left:0px;top:158px;width:905px;height:1px;background:#d5d8de;"></div>
<div class="r" style="left:0px;top:181px;width:905px;height:1px;background:#d5d8de;"></div>
<div class="r" style="left:0px;top:203px;width:905px;height:1px;background:#d5d8de;"></div>
<div class="r" style="left:0px;top:226px;width:905px;height:1px;background:#d5d8de;"></div>
<div class="r" style="left:0px;top:248px;width:905px;height:1px;background:#d5d8de;"></div>
<div class="r" style="left:0px;top:271px;width:905px;height:1px;background:#d5d8de;"></div>
<div class="r" style="left:0px;top:294px;width:905px;height:1px;background:#d5d8de;"></div>
<div class="r" style="left:0px;top:316px;width:905px;height:1px;background:#d5d8de;"></div>
<div class="r" style="left:0px;top:339px;width:905px;height:1px;background:#d5d8de;"></div>
<div class="r" style="left:0px;top:361px;width:905px;height:1px;background:#d5d8de;"></div>
<div class="r" style="left:0px;top:384px;width:905px;height:1px;background:#d5d8de;"></div>
<div class="r" style="left:0px;top:406px;width:905px;height:1px;background:#d5d8de;"></div>
<div class="r" style="left:0px;top:429px;width:905px;height:1px;background:#d5d8de;"></div>
<div class="r" style="left:0px;top:452px;width:905px;height:1px;background:#d5d8de;"></div>
<div class="r" style="left:0px;top:474px;width:905px;height:1px;background:#d5d8de;"></div>
<div class="r" style="left:0px;top:497px;width:905px;height:1px;background:#d5d8de;"></div>
<div class="r" style="left:0px;top:519px;width:905px;height:1px;background:#d5d8de;"></div>
<div class="r" style="left:0px;top:0px;width:1px;height:507px;background:#d5d8de;"></div>
<div class="r" style="left:39px;top:0px;width:1px;height:507px;background:#d5d8de;"></div>
<div class="r" style="left:183px;top:0px;width:1px;height:507px;background:#d5d8de;"></div>
<div class="r" style="left:231px;top:0px;width:1px;height:507px;background:#d5d8de;"></div>
<div class="r" style="left:568px;top:0px;width:1px;height:507px;background:#d5d8de;"></div>
<div class="r" style="left:904px;top:0px;width:1px;height:507px;background:#d5d8de;"></div>
<div class="t" style="left:45.00px;top:2px;font-size:10.6px;color:#212121;transform:scaleX(0.9300);transform-origin:0 0;text-decoration:underline;">ENU</div>
<div class="t" style="left:236.70px;top:2px;font-size:10.6px;color:#212121;transform:scaleX(0.9858);transform-origin:0 0;">Base_Unit_of_Measure</div>
<div class="t" style="left:572.90px;top:2px;font-size:10.6px;color:#212121;transform:scaleX(1.0263);transform-origin:0 0;">Base Unit of Measure</div>
<div class="t" style="left:45.00px;top:24px;font-size:10.6px;color:#212121;transform:scaleX(0.9300);transform-origin:0 0;">ENU</div>
<div class="t" style="left:236.70px;top:24px;font-size:10.6px;color:#212121;transform:scaleX(1.0149);transform-origin:0 0;">Blocked</div>
<div class="t" style="left:572.90px;top:24px;font-size:10.6px;color:#212121;transform:scaleX(0.9990);transform-origin:0 0;">Blocked</div>
<div class="t" style="left:45.00px;top:47px;font-size:10.6px;color:#212121;transform:scaleX(0.9300);transform-origin:0 0;">ENU</div>
<div class="t" style="left:236.70px;top:47px;font-size:10.6px;color:#212121;transform:scaleX(1.0044);transform-origin:0 0;">Card.Delete</div>
<div class="t" style="left:572.90px;top:47px;font-size:10.6px;color:#212121;transform:scaleX(1.0315);transform-origin:0 0;">Delete</div>
<div class="t" style="left:45.00px;top:69px;font-size:10.6px;color:#212121;transform:scaleX(0.9300);transform-origin:0 0;">ENU</div>
<div class="t" style="left:236.70px;top:69px;font-size:10.6px;color:#212121;transform:scaleX(1.0062);transform-origin:0 0;">Card.ExitAndJumpTo</div>
<div class="t" style="left:572.90px;top:69px;font-size:10.6px;color:#212121;transform:scaleX(1.0171);transform-origin:0 0;">Exit and Jump</div>
<div class="t" style="left:45.00px;top:92px;font-size:10.6px;color:#212121;transform:scaleX(0.9300);transform-origin:0 0;">ENU</div>
<div class="t" style="left:236.70px;top:92px;font-size:10.6px;color:#212121;transform:scaleX(1.0112);transform-origin:0 0;">Card.New</div>
<div class="t" style="left:572.90px;top:92px;font-size:10.6px;color:#212121;transform:scaleX(1.0210);transform-origin:0 0;">New</div>
<div class="t" style="left:45.00px;top:115px;font-size:10.6px;color:#212121;transform:scaleX(0.9300);transform-origin:0 0;">ENU</div>
<div class="t" style="left:236.70px;top:115px;font-size:10.6px;color:#212121;transform:scaleX(0.9976);transform-origin:0 0;">Card.Print.Label</div>
<div class="t" style="left:572.90px;top:115px;font-size:10.6px;color:#212121;transform:scaleX(1.0184);transform-origin:0 0;">Print Label</div>
<div class="t" style="left:45.00px;top:137px;font-size:10.6px;color:#212121;transform:scaleX(0.9300);transform-origin:0 0;">ENU</div>
<div class="t" style="left:236.70px;top:137px;font-size:10.6px;color:#212121;transform:scaleX(1.0011);transform-origin:0 0;">Card.Print.Preview</div>
<div class="t" style="left:572.90px;top:137px;font-size:10.6px;color:#212121;transform:scaleX(1.0130);transform-origin:0 0;">Print Preview</div>
<div class="t" style="left:45.00px;top:160px;font-size:10.6px;color:#212121;transform:scaleX(0.9300);transform-origin:0 0;">ENU</div>
<div class="t" style="left:236.70px;top:160px;font-size:10.6px;color:#212121;transform:scaleX(1.0137);transform-origin:0 0;">Card.Print.Report</div>
<div class="t" style="left:572.90px;top:160px;font-size:10.6px;color:#212121;transform:scaleX(1.0433);transform-origin:0 0;">Print Report</div>
<div class="t" style="left:45.00px;top:182px;font-size:10.6px;color:#212121;transform:scaleX(0.9300);transform-origin:0 0;">ENU</div>
<div class="t" style="left:236.70px;top:182px;font-size:10.6px;color:#212121;transform:scaleX(0.9491);transform-origin:0 0;">CCS_MS_LoT_Specific_Tracking</div>
<div class="t" style="left:572.90px;top:182px;font-size:10.6px;color:#212121;transform:scaleX(1.0196);transform-origin:0 0;">Lot Specific Tracking</div>
<div class="t" style="left:45.00px;top:205px;font-size:10.6px;color:#212121;transform:scaleX(0.9300);transform-origin:0 0;">ENU</div>
<div class="t" style="left:236.70px;top:205px;font-size:10.6px;color:#212121;transform:scaleX(0.9352);transform-origin:0 0;">CCS_MS_Req_Exp_Date_Entry</div>
<div class="t" style="left:572.90px;top:205px;font-size:10.6px;color:#212121;transform:scaleX(1.0290);transform-origin:0 0;">Require Expiration Date Entry</div>
<div class="t" style="left:45.00px;top:227px;font-size:10.6px;color:#212121;transform:scaleX(0.9300);transform-origin:0 0;">ENU</div>
<div class="t" style="left:236.70px;top:227px;font-size:10.6px;color:#212121;transform:scaleX(0.9483);transform-origin:0 0;">CCS_MS_SN_Specific_Tracking</div>
<div class="t" style="left:572.90px;top:227px;font-size:10.6px;color:#212121;transform:scaleX(1.0094);transform-origin:0 0;">SN Specific Tracking</div>
<div class="t" style="left:45.00px;top:250px;font-size:10.6px;color:#212121;transform:scaleX(0.9300);transform-origin:0 0;">ENU</div>
<div class="t" style="left:236.70px;top:250px;font-size:10.6px;color:#212121;transform:scaleX(1.0448);transform-origin:0 0;">CustomDrillDown1</div>
<div class="t" style="left:572.90px;top:250px;font-size:10.6px;color:#212121;transform:scaleX(1.0402);transform-origin:0 0;">CustomDrillDown1</div>
<div class="t" style="left:45.00px;top:273px;font-size:10.6px;color:#212121;transform:scaleX(0.9300);transform-origin:0 0;">ENU</div>
<div class="t" style="left:236.70px;top:273px;font-size:10.6px;color:#212121;transform:scaleX(1.0471);transform-origin:0 0;">CustomDrillDown2</div>
<div class="t" style="left:572.90px;top:273px;font-size:10.6px;color:#212121;transform:scaleX(1.0494);transform-origin:0 0;">CustomDrillDown2</div>
<div class="t" style="left:45.00px;top:295px;font-size:10.6px;color:#212121;transform:scaleX(0.9300);transform-origin:0 0;">ENU</div>
<div class="t" style="left:236.70px;top:295px;font-size:10.6px;color:#212121;transform:scaleX(1.0471);transform-origin:0 0;">CustomDrillDown3</div>
<div class="t" style="left:572.90px;top:295px;font-size:10.6px;color:#212121;transform:scaleX(1.0494);transform-origin:0 0;">CustomDrillDown3</div>
<div class="t" style="left:45.00px;top:318px;font-size:10.6px;color:#212121;transform:scaleX(0.9300);transform-origin:0 0;">ENU</div>
<div class="t" style="left:236.70px;top:318px;font-size:10.6px;color:#212121;transform:scaleX(1.0319);transform-origin:0 0;">CustomFunction1</div>
<div class="t" style="left:572.90px;top:318px;font-size:10.6px;color:#212121;transform:scaleX(1.0259);transform-origin:0 0;">CustomFunction1</div>
<div class="t" style="left:45.00px;top:340px;font-size:10.6px;color:#212121;transform:scaleX(0.9300);transform-origin:0 0;">ENU</div>
<div class="t" style="left:236.70px;top:340px;font-size:10.6px;color:#212121;transform:scaleX(1.0355);transform-origin:0 0;">CustomFunction2</div>
<div class="t" style="left:572.90px;top:340px;font-size:10.6px;color:#212121;transform:scaleX(1.0379);transform-origin:0 0;">CustomFunction2</div>
<div class="t" style="left:45.00px;top:363px;font-size:10.6px;color:#212121;transform:scaleX(0.9300);transform-origin:0 0;">ENU</div>
<div class="t" style="left:236.70px;top:363px;font-size:10.6px;color:#212121;transform:scaleX(1.0355);transform-origin:0 0;">CustomFunction3</div>
<div class="t" style="left:572.90px;top:363px;font-size:10.6px;color:#212121;transform:scaleX(1.0379);transform-origin:0 0;">CustomFunction3</div>
<div class="t" style="left:45.00px;top:385px;font-size:10.6px;color:#212121;transform:scaleX(0.9300);transform-origin:0 0;">ENU</div>
<div class="t" style="left:236.70px;top:385px;font-size:10.6px;color:#212121;transform:scaleX(1.0355);transform-origin:0 0;">CustomFunction4</div>
<div class="t" style="left:572.90px;top:385px;font-size:10.6px;color:#212121;transform:scaleX(1.0379);transform-origin:0 0;">CustomFunction4</div>
<div class="t" style="left:45.00px;top:408px;font-size:10.6px;color:#212121;transform:scaleX(0.9300);transform-origin:0 0;">ENU</div>
<div class="t" style="left:236.70px;top:408px;font-size:10.6px;color:#212121;transform:scaleX(1.0355);transform-origin:0 0;">CustomFunction5</div>
<div class="t" style="left:572.90px;top:408px;font-size:10.6px;color:#212121;transform:scaleX(1.0379);transform-origin:0 0;">CustomFunction5</div>
<div class="t" style="left:45.00px;top:431px;font-size:10.6px;color:#212121;transform:scaleX(0.9300);transform-origin:0 0;">ENU</div>
<div class="t" style="left:236.70px;top:431px;font-size:10.6px;color:#212121;transform:scaleX(1.0491);transform-origin:0 0;">Description</div>
<div class="t" style="left:572.90px;top:431px;font-size:10.6px;color:#212121;transform:scaleX(1.0566);transform-origin:0 0;">Description</div>
<div class="t" style="left:45.00px;top:453px;font-size:10.6px;color:#212121;transform:scaleX(0.9300);transform-origin:0 0;">ENU</div>
<div class="t" style="left:236.70px;top:453px;font-size:10.6px;color:#212121;transform:scaleX(1.0228);transform-origin:0 0;">Description_2</div>
<div class="t" style="left:572.90px;top:453px;font-size:10.6px;color:#212121;transform:scaleX(1.0493);transform-origin:0 0;">Description 2</div>
<div class="t" style="left:45.00px;top:476px;font-size:10.6px;color:#212121;transform:scaleX(0.9300);transform-origin:0 0;">ENU</div>
<div class="t" style="left:236.70px;top:476px;font-size:10.6px;color:#212121;transform:scaleX(1.0615);transform-origin:0 0;">Inventory</div>
<div class="t" style="left:572.90px;top:476px;font-size:10.6px;color:#212121;transform:scaleX(1.0569);transform-origin:0 0;">Inventory</div>
<div class="t" style="left:45.00px;top:498px;font-size:10.6px;color:#212121;transform:scaleX(0.9300);transform-origin:0 0;">ENU</div>
<div class="t" style="left:236.70px;top:498px;font-size:10.6px;color:#212121;">Item_Tracking_Code</div>
<div class="t" style="left:572.90px;top:498px;font-size:10.6px;color:#212121;">Item Tracking Code</div>
<div class="t" style="left:13.40px;top:3px;font-size:10px;color:#212121;"></div>
<svg class="r" style="left:14px;top:7px;" width="12" height="11" viewBox="0 0 12 11"><path d="M1 5.5h9.5M6.3 1.3l4.2 4.2-4.2 4.2" fill="none" stroke="#666" stroke-width="0.9"/></svg>
<svg class="r" style="left:206px;top:6px;" width="4" height="13" viewBox="0 0 4 13"><circle cx="2" cy="1.6" r="0.9" fill="#333"/><circle cx="2" cy="6.3" r="0.9" fill="#333"/><circle cx="2" cy="11" r="0.9" fill="#333"/></svg>
</div>
<div class="r" style="left:1402px;top:310px;width:17px;height:507px;background:#f1f1f1;"></div>
<div class="r" style="left:497px;top:817px;width:922px;height:1px;background:#d3d5d8;"></div>
<div class="r" style="left:1404px;top:327px;width:13px;height:72px;background:#c1c1c1;"></div>
<svg class="r" style="left:1406px;top:316px;" width="10" height="6" viewBox="0 0 10 6"><path d="M1 5.5L5 1.2l4 4.3z" fill="#808080"/></svg>
<svg class="r" style="left:1406px;top:806px;" width="10" height="6" viewBox="0 0 10 6"><path d="M1 0.5L5 4.8l4-4.3z" fill="#505050"/></svg>
<div class="r" style="left:1352px;top:833px;width:67px;height:26px;background:#ffffff;box-sizing:border-box;border:1px solid #8a8886;border-radius:2px;"></div>
<div class="t" style="left:1371.10px;top:836px;font-size:10.55px;color:#212121;transform:scaleX(0.9980);transform-origin:0 0;">Close</div>
</div>
</body></html>
